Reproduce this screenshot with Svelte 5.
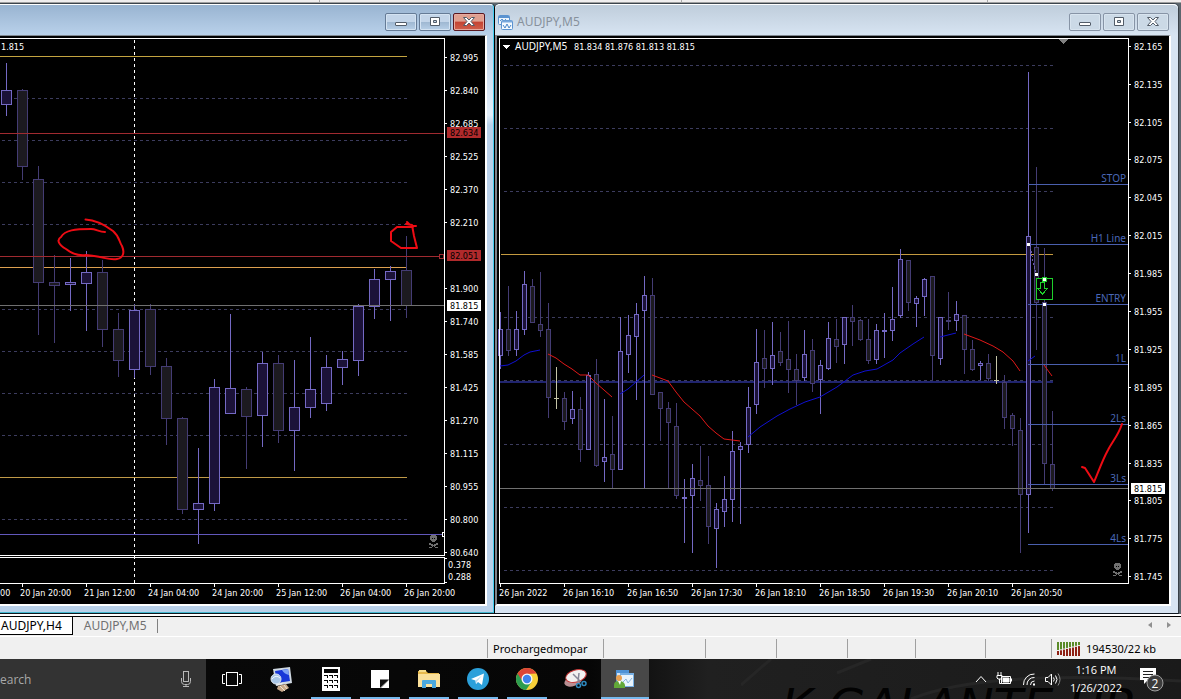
<script>
  // Each candle: [high, body top, body bottom, low, kind]; u = up, d = down, n = neutral
  const h4 = [
    [63, 90, 104, 115, 'u'], [89, 90, 166, 179, 'd'], [166, 179, 282, 334, 'd'], [255, 282, 285, 342, 'd'],
    [258, 282, 284, 310, 'u'], [251, 272, 283, 330, 'u'], [260, 272, 329, 346, 'd'], [313, 329, 360, 376, 'd'],
    [304, 310, 369, 377, 'u'], [304, 309, 366, 374, 'd'], [358, 366, 418, 444, 'd'], [417, 418, 509, 513, 'd'],
    [448, 503, 509, 543, 'u'], [379, 387, 503, 510, 'u'], [314, 388, 413, 413, 'u'], [387, 389, 416, 468, 'd'],
    [352, 363, 415, 446, 'u'], [355, 363, 430, 442, 'd'], [360, 407, 430, 470, 'u'], [337, 389, 407, 417, 'u'],
    [355, 367, 403, 410, 'u'], [351, 359, 367, 384, 'u'], [304, 306, 360, 375, 'u'], [269, 279, 306, 318, 'u'],
    [266, 271, 279, 320, 'u'], [236, 270, 305, 317, 'd']
  ];
  const m5 = [
    [312, 329, 355, 368, 'u'], [286, 329, 350, 355, 'd'], [311, 329, 349, 355, 'u'], [271, 284, 329, 334, 'u'],
    [279, 286, 322, 322, 'd'], [272, 324, 330, 336, 'd'], [303, 329, 397, 417, 'd'], [367, 398, 398, 408, 'n'],
    [392, 398, 421, 429, 'd'], [391, 409, 418, 423, 'u'], [397, 409, 449, 461, 'd'], [372, 375, 449, 449, 'u'],
    [359, 374, 465, 466, 'd'], [399, 457, 461, 481, 'u'], [416, 454, 469, 488, 'd'], [317, 351, 469, 469, 'u'],
    [315, 335, 354, 372, 'u'], [303, 314, 336, 399, 'u'], [276, 295, 310, 488, 'u'], [278, 295, 394, 394, 'd'],
    [392, 392, 408, 440, 'd'], [402, 408, 422, 488, 'd'], [403, 426, 495, 498, 'd'], [479, 497, 498, 542, 'u'],
    [464, 478, 495, 552, 'u'], [446, 480, 485, 500, 'd'], [456, 485, 526, 543, 'd'], [503, 509, 528, 567, 'u'],
    [476, 499, 511, 526, 'u'], [431, 451, 499, 521, 'u'], [442, 446, 449, 523, 'u'], [387, 407, 444, 452, 'u'],
    [329, 362, 404, 413, 'u'], [330, 358, 368, 387, 'd'], [322, 355, 368, 384, 'u'], [332, 351, 362, 365, 'd'],
    [321, 359, 369, 392, 'd'], [354, 369, 380, 404, 'd'], [330, 354, 377, 380, 'u'], [339, 350, 383, 391, 'd'],
    [360, 365, 379, 413, 'u'], [322, 338, 368, 369, 'u'], [319, 339, 346, 362, 'd'], [317, 317, 344, 363, 'u'],
    [305, 317, 321, 345, 'd'], [319, 320, 339, 340, 'd'], [319, 339, 360, 363, 'd'], [324, 330, 359, 363, 'u'],
    [313, 330, 331, 357, 'u'], [287, 319, 330, 340, 'u'], [249, 259, 315, 317, 'u'], [260, 260, 302, 310, 'd'],
    [296, 298, 303, 326, 'u'], [278, 279, 296, 315, 'u'], [276, 276, 355, 379, 'd'], [317, 317, 358, 364, 'u'],
    [292, 320, 321, 329, 'd'], [301, 314, 320, 330, 'u'], [315, 315, 349, 373, 'd'], [340, 349, 369, 370, 'd'],
    [361, 363, 365, 379, 'u'], [354, 363, 378, 380, 'd'], [356, 380, 380, 383, 'n'], [375, 382, 417, 428, 'd'],
    [413, 415, 428, 445, 'd'], [418, 430, 494, 552, 'd'], [72, 236, 494, 532, 'u'], [167, 247, 302, 349, 'd'],
    [248, 302, 463, 484, 'd'], [411, 464, 488, 490, 'd']
  ];
  const h4Prices = [
    ['82.995', 57], ['82.840', 90], ['82.685', 123], ['82.525', 156], ['82.370', 189], ['82.210', 222],
    ['81.900', 288], ['81.740', 321], ['81.585', 354], ['81.425', 387], ['81.270', 420],
    ['81.115', 453], ['80.955', 486], ['80.800', 519], ['80.640', 552]
  ];
  const m5Prices = [
    ['82.165', 46], ['82.135', 84], ['82.105', 122], ['82.075', 159], ['82.045', 197], ['82.015', 235],
    ['81.985', 273], ['81.955', 311], ['81.925', 349], ['81.895', 387], ['81.865', 425], ['81.835', 463],
    ['81.805', 500], ['81.775', 538], ['81.745', 576]
  ];
  const h4Times = ['20 Jan 20:00', '21 Jan 12:00', '24 Jan 04:00', '24 Jan 20:00', '25 Jan 12:00', '26 Jan 04:00', '26 Jan 20:00'];
  const m5Times = ['26 Jan 2022', '26 Jan 16:10', '26 Jan 16:50', '26 Jan 17:30', '26 Jan 18:10', '26 Jan 18:50', '26 Jan 19:30', '26 Jan 20:10', '26 Jan 20:50'];
  const levels = [['STOP', 184], ['H1 Line', 244], ['ENTRY', 304], ['1L', 364], ['2Ls', 424], ['3Ls', 484], ['4Ls', 544]];
  const maUp = [
    '500,366 508,365 516,361 524,355 530,352 540,350',
    '620,394 628,389 636,382 644,375',
    '748,437 760,427 777,416 790,409 805,402 820,397 837,387 853,375 865,371 877,369 893,360 900,353 913,344 924,337',
    '940,337 956,333',
    '1028,361 1035,356'
  ];
  const maDown = [
    '548,354 556,358 564,364 572,369 580,375 588,375 596,383 604,390 612,397',
    '652,375 660,378 668,381 676,392 684,402 692,409 700,416 708,426 716,433 724,439 732,440 740,441',
    '964,334 980,340 993,346 1003,352 1013,361 1020,371',
    '1044,365 1052,376'
  ];
  const buttons = ['Minimize', 'Restore', 'Close'];
</script>

{#snippet candles(list, start, step, half)}
  {#each list as [hi, top, bottom, lo, kind], i}
    {@const x = start + i * step}
    <g class="candle {kind}">
      <rect class="wick" x={x} y={hi} width="1" height={lo - hi + 1} />
      {#if bottom - top < 2}
        <rect class="wick" x={x - half} y={top} width={half * 2 + 1} height={bottom - top + 1} />
      {:else}
        <rect class="body" x={x - half + 0.5} y={top + 0.5} width={half * 2} height={bottom - top} />
      {/if}
    </g>
  {/each}
{/snippet}

{#snippet skull(x, y)}
  <g transform="translate({x} {y})" fill="#707070">
    <path d="M2 0h5v1h1v4h-1v1h-1v1H3V6H2V5H1V1h1zM3 3v1h1V3zM5 3v1h1V3z" fill-rule="evenodd" />
    <path d="M0 8h2v1h2v1h1V9h2V8h2v2H7v1H6v1h3v1H6v-1H5v-1H4v1H3v1H0v-1h3v-1H2v-1H0z" />
  </g>
{/snippet}

{#snippet controls()}
  <div class="controls">
    {#each buttons as name}
      <button class={name.toLowerCase()} aria-label={name}>
        <svg width="12" height="10" viewBox="0 0 12 10" aria-hidden="true">
          {#if name === 'Minimize'}
            <rect x="0.5" y="5.5" width="11" height="3" rx="0.5" class="glyph" />
          {:else if name === 'Restore'}
            <path class="glyph" fill-rule="evenodd" d="M1.5 .5h9v8h-9zM4.5 3.5h3v2h-3z" />
          {:else}
            <path class="glyph" d="M.5 .5h3L6 3 8.5 .5h3L8 4.5l3.500 4h-3L6 6 3.500 8.500h-3L4 4.500z" />
          {/if}
        </svg>
      </button>
    {/each}
  </div>
{/snippet}

<div class="screen">
  <div class="toolbar-edge"><i></i><i></i><i></i><i></i></div>

  <main class="workspace">
    <section class="window active" aria-label="AUDJPY,H4">
      <header>{@render controls()}</header>
      <div class="frame">
        <svg class="chart" viewBox="0 36 485 568" role="img" aria-label="AUDJPY,H4">
          <rect y="36" width="485" height="568" />
          <g class="grid">
            {#each [98, 140, 182, 224, 309, 351, 393, 435, 519] as y}
              <path d="M2 {y}.5H407" />
            {/each}
          </g>
          <path class="period" d="M134.5 40V583" />
          <rect y="267" width="407" height="1" fill="#dda050" />
          <rect y="477" width="407" height="1" fill="#c09a48" />
          {@render candles(h4, 6, 16, 5)}
          <rect y="56" width="407" height="1" fill="#c4a440" />
          <rect y="133" width="444" height="1" fill="#a02a30" />
          <rect y="256" width="444" height="1" fill="#a02a30" />
          <rect y="305" width="444" height="1" fill="#707070" />
          <rect y="534" width="444" height="1" fill="#6258bc" />
          <path class="axis" d="M0 38.500H444.500V555.500H0M0 557.500H444.500V583.500H0M445 558.500h2M445 582.500h2" />
          {#each h4Prices as [label, y]}
            <rect class="tick" x="445" {y} width="2" height="1" />
            <text x="450" y={y + 4}>{label}</text>
          {/each}
          <text x="448" y="568">0.378</text>
          <text x="448" y="580">0.288</text>
          <rect x="447" y="127" width="34" height="11" fill="#b02a2c" />
          <text class="dark" x="450" y="136">82.634</text>
          <rect x="447" y="250" width="34" height="11" fill="#b02a2c" />
          <text class="dark" x="450" y="259">82.051</text>
          <rect x="447" y="300" width="34" height="11" fill="#fff" />
          <text class="dark" x="450" y="309">81.815</text>
          <rect x="439.5" y="254.5" width="4" height="4" stroke="#a02a30" />
          <rect x="442.5" y="532.5" width="2" height="4" stroke="#fff" />
          <text x="1" y="50">1.815</text>
          <text x="0" y="596">00</text>
          {#each h4Times as label, i}
            <rect class="tick" x={22 + i * 64} y="584" width="1" height="3" />
            <text x={20 + i * 64} y="596">{label}</text>
          {/each}
          {@render skull(429, 535)}
          <g class="pen">
            <path d="M85.500 219.500C95 220 105 225 113 231C120 237 119 242 122 246C125 253 123 258 117 259C110 261 102 256 86 255C78 256 71 253 66 249C59 245 56 240 61 237C65 230 75 229 91 229C96 229 99 232 105 232" />
            <path d="M407 222L411 226L416 226M413 227L397 227L391 232L391 241L401 248L417 248L414 236L412 225L406 224" />
          </g>
        </svg>
      </div>
    </section>

    <section class="window idle" aria-label="AUDJPY,M5">
      <header>
        <svg width="15" height="15" viewBox="0 0 15 15" aria-hidden="true">
          <rect x="0.5" y="0.5" width="11" height="9" rx="1" fill="#eef6fd" stroke="#5b93d0" />
          <path d="M1 2h10" stroke="#5b93d0" stroke-width="2" />
          <path d="M2 6l2-2 2 2 2-2" fill="none" stroke="#5b93d0" />
          <rect x="3.5" y="5.5" width="11" height="9" rx="1" fill="#f4faff" stroke="#5b93d0" />
          <path d="M4 6.500h10" stroke="#78a8dc" stroke-width="2" />
          <path d="M5 10l2 3 2-4 2 4 2-3" fill="none" stroke="#4b86c8" />
        </svg>
        <h2>AUDJPY,M5</h2>
        {@render controls()}
      </header>
      <div class="frame">
        <svg class="chart" viewBox="497 36 672 568" role="img" aria-label="AUDJPY,M5">
          <rect x="497" y="36" width="672" height="568" />
          <g class="grid">
            {#each [65, 128, 191, 317, 380, 444, 507, 570] as y}
              <path d="M504 {y}.5H1053" />
            {/each}
          </g>
          <rect x="500" y="381" width="553" height="2" fill="#20246e" />
          <rect x="501" y="254" width="552" height="1" fill="#c49a40" />
          {@render candles(m5, 500, 8, 2)}
          <rect x="500" y="488" width="628" height="1" fill="#707070" />
          <g class="ma up">{#each maUp as points}<polyline {points} />{/each}</g>
          <g class="ma down">{#each maDown as points}<polyline {points} />{/each}</g>
          {#each levels as [label, y]}
            <rect x="1028" {y} width="100" height="1" fill="#4a5fae" />
            <text class="level" x="1126" y={y - 2}>{label}</text>
          {/each}
          <path class="axis" d="M499.500 38.500H1128.500V583.500H499.500Z" />
          <path d="M1058 39h11l-5.500 5z" fill="#808080" />
          {#each m5Prices as [label, y]}
            <rect class="tick" x="1129" {y} width="2" height="1" />
            <text x="1134" y={y + 4}>{label}</text>
          {/each}
          <rect x="1131" y="483" width="34" height="11" fill="#fff" />
          <text class="dark" x="1134" y="492">81.815</text>
          {#each m5Times as label, i}
            <rect class="tick" x={500 + i * 64} y="584" width="1" height="3" />
            <text x={499 + i * 64} y="596">{label}</text>
          {/each}
          <path d="M503 45h7l-3.500 4z" fill="#fff" />
          <text class="symbol" x="515" y="50">AUDJPY,M5</text>
          <text x="574" y="50">81.834 81.876 81.813 81.815</text>
          <path d="M1030 247L1036 274" stroke="#6a5aa8" stroke-dasharray="2 2" />
          <g fill="#fff">
            <rect x="1027" y="243" width="3" height="3" />
            <rect x="1035" y="273" width="3" height="3" />
            <rect x="1043" y="303" width="3" height="3" />
          </g>
          <rect x="1036.5" y="278.5" width="16" height="21" stroke="#1fd02c" />
          <path d="M1040.500 282.500h4v6h3l-5 5.500-5-5.500h3z" stroke="#1fd02c" />
          <rect x="1042.5" y="277.5" width="4" height="4" fill="#fff" stroke="#1fd02c" />
          {@render skull(1113, 563)}
          <path class="pen" d="M1082 467L1085 468L1094 482C1098 473 1102 461 1108 450C1112 442 1118 436 1122 424" />
        </svg>
      </div>
    </section>
  </main>

  <nav class="tabs" aria-label="Charts">
    <a class="current" href="#h4">AUDJPY,H4</a>
    <a href="#m5">AUDJPY,M5</a>
    <span class="bar"></span>
    <div class="scroll">
      <button aria-label="Scroll left"><svg width="4" height="6" viewBox="0 0 4 6"><path d="M4 0v6L0 3z" /></svg></button>
      <button aria-label="Scroll right"><svg width="4" height="6" viewBox="0 0 4 6"><path d="M0 0v6l4-3z" /></svg></button>
    </div>
  </nav>

  <footer class="status">
    <span></span><span>Prochargedmopar</span><span></span><span></span><span></span><span></span><span></span><span></span>
    <span>
      <svg width="24" height="14" viewBox="0 0 24 14" aria-hidden="true">
        {#each [0, 1, 2, 3, 4, 5, 6, 7] as i}
          <rect x={i * 3} y="0" width="2" height={8 - i * 0.7} fill="#5a8a28" />
          <rect x={i * 3} y={9 - i * 0.7} width="2" height={5 + i * 0.7 - (i < 2 ? 1 : 0)} fill="#8e2014" />
        {/each}
      </svg>
      194530/22 kb
    </span>
  </footer>

  <div class="taskbar">
    <svg class="wallpaper" width="440" height="40" viewBox="0 0 440 40" aria-hidden="true">
      <path d="M30 0L0 26M130 0L96 14M170 40C220 20 300 14 440 22" stroke="#262626" stroke-width="3" fill="none" />
      <text x="396" y="64">K GALANTE UR</text>
    </svg>
    <div class="search">
      <span>earch</span>
      <svg width="12" height="18" viewBox="0 0 12 18" fill="none" stroke="#b8b8b8" aria-hidden="true">
        <rect x="3.5" y="1.5" width="5" height="10" />
        <path d="M1.500 8v3.500q0 3 3 3h3q3 0 3-3V8M6 14.500V17M3 16.500h6" />
      </svg>
    </div>
    <button class="app wide" aria-label="Task View">
      <svg width="20" height="16" viewBox="0 0 20 16" fill="none" stroke="#fff"><rect x="4.5" y="1.5" width="11" height="13" /><path d="M3 3.500H.5v9H3M17 3.500h2.500v9H17" /></svg>
    </button>
    <button class="app wide" aria-label="Remote desktop">
      <svg width="24" height="26" viewBox="0 0 24 26">
        <path d="M3 3L20 1 22 17 6 20z" fill="#cfd8e2" /><path d="M5 5L18 3 20 15 7 17z" fill="#1838d8" /><path d="M12 4l6-1 1 6q-5-1-7-5z" fill="#7fa4f4" />
        <path d="M8 20l8-2 3 4-7 4-5-3z" fill="#c8a88a" /><path d="M10 20l5 5M14 19l3 4" stroke="#f0e4d4" />
        <circle cx="6" cy="13" r="5" fill="#a9c6e6" stroke="#dfe8f0" /><path d="M2 13q4-5 8-1" stroke="#f0f6fc" fill="none" /><path d="M7 19l6-2" stroke="#eee" />
      </svg>
    </button>
    <button class="app open" aria-label="Calculator">
      <svg width="18" height="24" viewBox="0 0 18 24"><path d="M0 0h18v24H0z" fill="#fff" /><path d="M2 2h14v4H2z" fill="#050505" />
        {#each [8, 13, 18] as y}{#each [2, 7, 12] as x}<path d="M{x} {y}h4v3h-1v-2h-3z" fill="#050505" />{/each}{/each}
      </svg>
    </button>
    <button class="app open" aria-label="Sticky Notes">
      <svg width="18" height="18" viewBox="0 0 18 18"><path d="M0 0h18v10l-8 8H0z" fill="#fff" /><path d="M9 18V9.500h9z" fill="#111" /><path d="M18 10v8h-8z" fill="#fff" /></svg>
    </button>
    <button class="app open" aria-label="File Explorer">
      <svg width="22" height="20" viewBox="0 0 22 20"><path d="M0 2h8l2 2h11v14H0z" fill="#e8b94c" /><path d="M1 1h7v2H1z" fill="#f6dc8c" /><path d="M0 5h22v13H0z" fill="#fbe09a" /><path d="M4 19v-7q0-1 1-1h12q1 0 1 1v7h-4v-4H8v4z" fill="#4ba8dc" /></svg>
    </button>
    <button class="app open" aria-label="Telegram">
      <svg width="22" height="22" viewBox="0 0 22 22"><circle cx="11" cy="11" r="11" fill="#2ba0da" /><path d="M4 11L17 5.500 15 17 11 14 9 16 8.500 12.500z" fill="#fff" /><path d="M8.500 12.500L15 7.500 10 13.500 9 16z" fill="#bcdcf0" /></svg>
    </button>
    <button class="app open" aria-label="Chrome">
      <svg width="22" height="22" viewBox="0 0 22 22"><circle cx="11" cy="11" r="11" fill="#f7cf38" /><path d="M11 11L1.500 5.500A11 11 0 0 0 10 22L15.500 14z" fill="#2c9d50" /><path d="M1.500 5.500A11 11 0 0 1 20.500 5.500L11 6 7 14z" fill="#db4537" /><circle cx="11" cy="11" r="5.500" fill="#f6f8fb" /><circle cx="11" cy="11" r="4.200" fill="#3e82ee" /></svg>
    </button>
    <button class="app" aria-label="Snipping Tool">
      <svg width="24" height="22" viewBox="0 0 24 22"><ellipse cx="9" cy="13" rx="9" ry="5" fill="#b88e92" transform="rotate(-20 9 13)" /><ellipse cx="12" cy="8" rx="10.500" ry="6" fill="#f1f1f1" stroke="#c83838" stroke-width="1" transform="rotate(-16 12 8)" /><path d="M9 6l8 8M15 5l-1 9" stroke="#889" stroke-width="1.500" /><circle cx="14.500" cy="17.500" r="2" fill="none" stroke="#2f88be" stroke-width="1.500" /><circle cx="20" cy="15.500" r="2" fill="none" stroke="#2f88be" stroke-width="1.500" /></svg>
    </button>
    <button class="app focused" aria-label="MetaTrader">
      <svg width="22" height="20" viewBox="0 0 22 20"><path d="M2 1h13v13H2z" fill="#4f93d6" /><path d="M3 4h11v9H3z" fill="#cfe4f6" /><path d="M6 4h14v14H6z" fill="#78b0e4" /><path d="M7 6h12v11H7z" fill="#eaf4fc" /><path d="M9 13l3-3 2 4 4-5" fill="none" stroke="#88b4dc" /><circle cx="5" cy="9" r="3" fill="#e8a050" /><path d="M0 19v-3q0-4 5-4t6 4v3z" fill="#62a838" /><path d="M4 12h3l-1 4z" fill="#fff" /></svg>
    </button>
    <div class="tray">
      <svg width="12" height="8" viewBox="0 0 12 8"><path d="M1 7l5-5.500L11 7" /></svg>
      <svg width="17" height="14" viewBox="0 0 17 14"><path d="M5.500 4.500h9v7h-9zM2 0v3M5 0v3M1 3.500h5V6l-1 1H2L1 6zM3.500 7v4.500h2" /><path d="M7 6h6v4H7z" fill="#fff" /><path d="M15.500 6.500v3" /></svg>
      <svg width="14" height="13" viewBox="0 0 14 13"><path d="M1.500 12A10.500 10.500 0 0 1 12.500 1M5 12a7 7 0 0 1 7.500-7.500M8.500 12a4 4 0 0 1 4-4" /><rect x="11" y="10.500" width="2" height="2" fill="#fff" stroke="none" /></svg>
      <svg width="16" height="13" viewBox="0 0 16 13"><path d="M.5 4.500H3l3.500-3.500v11L3 8.500H.5zM8.500 4.500q1.500 2 0 4M10.500 2.500q3 4 0 8" /><path d="M13 .5q4 6 0 12" stroke="#888" /></svg>
      <time>1:16 PM<br />1/26/2022</time>
      <button class="notice" aria-label="2 notifications">
        <svg width="26" height="26" viewBox="0 0 26 26"><path d="M1 2h16v12H9l-4 4v-4H1z" fill="#fff" stroke="none" /><path d="M4 5.500h10M4 8.500h10M4 11.500h6" stroke="#222" /><circle cx="16" cy="17" r="8" fill="#3c3c3c" stroke="#a0a0a0" /><text x="16" y="21.500">2</text></svg>
      </button>
    </div>
  </div>
</div>

<style>
  :global(body) { margin: 0; background: #f0f0f0; }
  .screen { font-family: "Noto Sans", sans-serif; display: flex; flex-direction: column; min-height: 100vh; overflow: hidden; }
  button { border: 0; padding: 0; background: none; display: flex; align-items: center; justify-content: center; }

  .toolbar-edge { height: 2px; background: #f0eeee; display: grid; grid-template-columns: 319fr 362fr 306fr 194fr; border-bottom: 1px solid #a0a0a0; }
  .toolbar-edge i + i { border-left: 1px solid #aaa; }

  .workspace { display: grid; grid-template-columns: 495fr 684fr; padding-right: 2px; border-bottom: 2px solid #fff; background: #5c666e; }
  .window { display: flex; flex-direction: column; border-top: 1px solid #3c444c; border-bottom: 1px solid #101820; }
  .window header { display: flex; align-items: center; box-sizing: border-box; height: 31px; padding: 4px 8px 0 0; border-top: 1px solid #fff; }
  .window h2 { margin: 0 0 0 4px; font-size: 12px; font-weight: 400; line-height: 16px; color: #87919c; }
  .active { background: #b9d1ea; border-right: 1px solid #000; border-radius: 0 5px 0 0; }
  .window.active header { background: linear-gradient(#99b4d1, #b9d1ea); border-right: 1px solid #42cdf0; border-top-right-radius: 4px; }
  .idle { background: #d7e4f2; border-right: 1px solid #384048; border-radius: 5px 5px 0 0; }
  .window.idle header { padding: 4px 9px 0 3px; background: linear-gradient(#bfcddb, #d7e4f2); border-radius: 5px 5px 0 0; }
  .active .frame { padding: 0 6px 6px 0; border-right: 1px solid #42cdf0; border-bottom: 1px solid #42b8d0; background: linear-gradient(#b9d1ea, #e4effa 80px, #b9d1ea 90px); }
  .idle .frame { padding: 0 7px 7px 0; }
  .chart { display: block; height: auto; box-sizing: content-box; border-top: 1px solid #808890; border-right: 2px solid #fff; border-bottom: 2px solid #fff; }
  .active .chart { width: calc(100% - 2px); }
  .idle .chart { width: calc(100% - 4px); border-left: 2px solid #80848c; }

  .controls { display: flex; gap: 2px; margin-left: auto; }
  .controls button { width: 32px; height: 18px; box-sizing: border-box; border: 1px solid #657b96; border-radius: 2px; box-shadow: inset 0 0 0 1px #d4e3f2; background: linear-gradient(#c3d5e9 48%, #9fb8d2 52%, #b8d0e8); }
  .idle .controls button { border-color: #8794a6; background: #cbd9e6; box-shadow: inset 0 0 0 1px #d8e4ef; }
  .active .controls .close { border-color: #5a1820; background: linear-gradient(#e0a090 45%, #c44332 50%, #d0604c); box-shadow: inset 0 0 0 1px #e6aaa0; }
  .glyph { fill: #fff; stroke: #525c68; }

  .chart text { font-family: "DejaVu Sans Condensed", "DejaVu Sans", sans-serif; font-size: 9px; fill: #fff; }
  .chart .symbol { font-family: "Noto Sans", sans-serif; font-size: 10px; }
  .chart .dark { fill: #000; }
  .chart .level { font-family: "Noto Sans", sans-serif; font-size: 10px; fill: #4a68b8; text-anchor: end; }
  .chart path, .chart rect { shape-rendering: crispEdges; }
  .grid path { stroke: #3c3c5e; stroke-dasharray: 3 3; }
  .period { stroke: #fff; stroke-dasharray: 3 3; }
  .axis { fill: none; stroke: #fff; }
  .tick { fill: #fff; }
  .u .wick { fill: #7469c4; }
  .u .body { fill: #1b1238; stroke: #7469c4; }
  .d .wick { fill: #443c74; }
  .d .body { fill: #1c1a20; stroke: #443c74; }
  .n .wick { fill: #c4c4a8; }
  .ma { fill: none; }
  .up { stroke: #1010d0; }
  .down { stroke: #e01818; }
  .chart .pen, .chart .pen path { fill: none; stroke: #ee0c14; stroke-width: 2; stroke-linejoin: round; stroke-linecap: round; shape-rendering: auto; }

  .tabs { display: flex; align-items: flex-start; height: 19px; border-top: 1px solid #000; border-bottom: 1px solid #fff; background: #f0f0f0; font-size: 12px; line-height: 17px; }
  .tabs a { color: #707070; text-decoration: none; padding: 0 10px 0 11px; }
  .tabs .current { color: #000; background: #fff; border-right: 1px solid #000; border-bottom: 1px solid #000; padding: 0 10px 0 1px; }
  .tabs .bar { width: 1px; height: 14px; margin-top: 2px; background: #808080; }
  .scroll { margin-left: auto; display: flex; gap: 15px; padding: 5px 10px 0 0; }
  .scroll path { fill: #909090; }

  .status { display: grid; grid-template-columns: 487fr 116fr 102fr 71fr 71fr 68fr 70fr 66fr 130fr; height: 22px; background: #f0f0f0; font-size: 11px; }
  .status span { display: flex; align-items: center; gap: 5px; margin: 2px 0 1px; padding-left: 5px; white-space: nowrap; }
  .status span + span { border-left: 1px solid #a0a0a0; }

  .taskbar { position: relative; display: flex; align-items: stretch; gap: 1px; height: 40px; margin-top: auto; background: linear-gradient(90deg, #080808 207px, #060606 50%, #202020 60%, #1a1a1a); overflow: hidden; }
  .wallpaper { position: absolute; right: 0; top: 0; }
  .wallpaper text { font: italic 48px "DejaVu Sans", sans-serif; fill: #020202; text-anchor: end; }
  .search { width: 206px; display: flex; align-items: center; justify-content: space-between; background: #333; color: #a8a8a8; font-family: "Open Sans", sans-serif; font-size: 12px; }
  .search svg { margin-right: 14px; }
  .app { position: relative; width: 48px; }
  .wide { width: 49px; }
  .open::after, .focused::after { content: ""; position: absolute; bottom: 0; left: 4px; right: 4px; height: 2px; background: #76b9ed; }
  .focused { background: #484848; }
  .focused::after { left: 0; right: 0; }
  .tray { position: relative; margin-left: auto; display: flex; align-items: center; gap: 9px; padding-right: 16px; color: #fff; }
  .tray svg { fill: none; stroke: #fff; }
  .tray time { font-family: "Open Sans", sans-serif; font-size: 11px; line-height: 18px; text-align: center; }
  .notice { margin-left: 8px; }
  .notice text { font: 12px "Open Sans", sans-serif; text-anchor: middle; fill: #fff; stroke: none; }
</style>
